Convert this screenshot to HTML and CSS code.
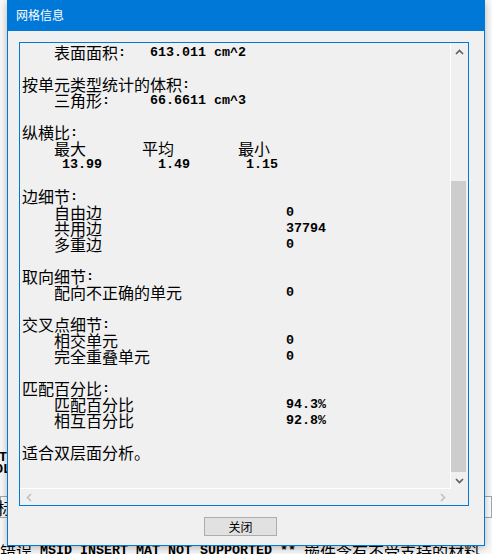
FILE: index.html
```html
<!DOCTYPE html>
<html lang="zh-CN">
<head>
<meta charset="utf-8">
<title>网格信息</title>
<link rel="stylesheet" href="styles.css">
</head>
<body>
  <!-- log window underneath the dialog -->
  <div class="log">
    <div class="log-line log-t">T</div>
    <div class="log-line log-ol">OL</div>
    <div class="log-field"><span class="log-cn">标</span></div>
    <div class="log-line log-err"><span class="log-cn">错误</span><span> MSID_INSERT_MAT_NOT_SUPPORTED ** </span><span class="log-cn">嵌件含有不受支持的材料</span></div>
  </div>

  <section class="dialog">
    <header class="titlebar">网格信息</header>
    <div class="client">
      <div class="report">
        <div class="report-text">
          <div class="ln sub"><span class="k w96"><span class="cn">表面面积</span><span class="num">:</span></span><span class="num">613.011 cm^2</span></div>
          <div class="ln"></div>
          <div class="ln"><span class="cn">按单元类型统计的体积</span><span class="num">:</span></div>
          <div class="ln sub"><span class="k w96"><span class="cn">三角形</span><span class="num">:</span></span><span class="num">66.6611 cm^3</span></div>
          <div class="ln"></div>
          <div class="ln"><span class="cn">纵横比</span><span class="num">:</span></div>
          <div class="ln sub"><span class="k w88"><span class="cn">最大</span></span><span class="k w96"><span class="cn">平均</span></span><span class="cn">最小</span></div>
          <div class="ln sub-num"><span class="k w96"><span class="num">13.99</span></span><span class="k w88"><span class="num">1.49</span></span><span class="num">1.15</span></div>
          <div class="ln"></div>
          <div class="ln"><span class="cn">边细节</span><span class="num">:</span></div>
          <div class="ln sub"><span class="k w232"><span class="cn">自由边</span></span><span class="num">0</span></div>
          <div class="ln sub"><span class="k w232"><span class="cn">共用边</span></span><span class="num">37794</span></div>
          <div class="ln sub"><span class="k w232"><span class="cn">多重边</span></span><span class="num">0</span></div>
          <div class="ln"></div>
          <div class="ln"><span class="cn">取向细节</span><span class="num">:</span></div>
          <div class="ln sub"><span class="k w232"><span class="cn">配向不正确的单元</span></span><span class="num">0</span></div>
          <div class="ln"></div>
          <div class="ln"><span class="cn">交叉点细节</span><span class="num">:</span></div>
          <div class="ln sub"><span class="k w232"><span class="cn">相交单元</span></span><span class="num">0</span></div>
          <div class="ln sub"><span class="k w232"><span class="cn">完全重叠单元</span></span><span class="num">0</span></div>
          <div class="ln"></div>
          <div class="ln"><span class="cn">匹配百分比</span><span class="num">:</span></div>
          <div class="ln sub"><span class="k w232"><span class="cn">匹配百分比</span></span><span class="num">94.3%</span></div>
          <div class="ln sub"><span class="k w232"><span class="cn">相互百分比</span></span><span class="num">92.8%</span></div>
          <div class="ln"></div>
          <div class="ln"><span class="cn">适合双层面分析。</span></div>
        </div>

        <div class="vscroll">
          <div class="sb-btn">
            <svg width="9" height="6" viewBox="0 0 9 6"><polyline points="1,5 4.5,1.5 8,5" fill="none" stroke="#606060" stroke-width="1.7"/></svg>
          </div>
          <div class="vtrack"><div class="vthumb"></div></div>
          <div class="sb-btn">
            <svg width="9" height="6" viewBox="0 0 9 6"><polyline points="1,1 4.5,4.5 8,1" fill="none" stroke="#606060" stroke-width="1.7"/></svg>
          </div>
        </div>

        <div class="hscroll">
          <div class="sb-btn">
            <svg width="6" height="9" viewBox="0 0 6 9"><polyline points="5,1 1.5,4.5 5,8" fill="none" stroke="#c2c2c2" stroke-width="1.7"/></svg>
          </div>
          <div class="htrack"></div>
          <div class="sb-btn">
            <svg width="6" height="9" viewBox="0 0 6 9"><polyline points="1,1 4.5,4.5 1,8" fill="none" stroke="#c2c2c2" stroke-width="1.7"/></svg>
          </div>
        </div>

        <div class="corner"></div>
      </div>

      <div class="actions">
        <button class="btn" type="button">关闭</button>
      </div>
    </div>
  </section>
</body>
</html>
```

FILE: styles.css
```css
html, body {
  margin: 0;
  padding: 0;
}

body {
  position: relative;
  width: 492px;
  height: 554px;
  overflow: hidden;
  background: #f9f9f9;
  font-family: "Noto Sans CJK SC", sans-serif;
}

/* ---------- log window behind the dialog ---------- */
.log {
  padding-top: 452px;
  font: bold 13.333px "Liberation Mono", monospace;
  color: #000;
}

.log-line {
  height: 12px;
  line-height: 12px;
  white-space: pre;
}

.log-t { margin-left: -1px; }
.log-ol { margin-left: -5px; }

.log-field {
  margin-top: 20px;
  height: 22px;
  box-sizing: border-box;
  border: 1px solid #a6a6a6;
  background: #fcfcfc;
  padding-left: 0;
  display: flex;
  align-items: center;
}

.log-field .log-cn {
  margin-left: -4px;
}

.log-cn {
  font: 16px/16px "Noto Sans CJK SC", sans-serif;
}

.log-err {
  margin-top: 25px;
  height: 16px;
  line-height: 16px;
  display: flex;
  align-items: center;
}

/* ---------- dialog ---------- */
.dialog {
  position: absolute;
  left: 7px;
  top: 0;
  width: 478px;
  height: 546px;
  box-sizing: border-box;
  border: 1px solid #0078d7;
  background: #f0f0f0;
  box-shadow: 0 2px 8px rgba(0, 0, 0, 0.28);
  display: flex;
  flex-direction: column;
}

.titlebar {
  height: 30px;
  line-height: 28px;
  padding-left: 8px;
  background: #0078d7;
  color: #fff;
  font-size: 12px;
}

.client {
  padding: 11px 15px 0 11px;
  display: flex;
  flex-direction: column;
}

/* edit box with scrollbars */
.report {
  width: 450px;
  height: 464px;
  box-sizing: border-box;
  border: 1px solid #0078d7;
  display: grid;
  grid-template-columns: 431px 17px;
  grid-template-rows: 446px 16px;
}

.report-text {
  border-right: 1px solid #fff;
  border-bottom: 1px solid #fff;
  padding: 2px 0 0 2px;
  overflow: hidden;
  color: #000;
}

.ln {
  display: flex;
  align-items: center;
  height: 16px;
  white-space: pre;
}

.sub { padding-left: 32px; }
.sub-num { padding-left: 40px; }

.k {
  display: flex;
  align-items: center;
  flex: none;
}

.w88 { width: 88px; }
.w96 { width: 96px; }
.w232 { width: 232px; }

.cn {
  font-size: 16px;
  line-height: 16px;
  position: relative;
  top: -1px;
}

.num {
  font: bold 13.333px/16px "Liberation Mono", monospace;
}

.vscroll {
  display: flex;
  flex-direction: column;
}

.sb-btn {
  flex: none;
  width: 17px;
  height: 17px;
  display: flex;
  align-items: center;
  justify-content: center;
}

.vscroll .sb-btn { width: 17px; }

.vtrack {
  flex: 1;
  display: flex;
  flex-direction: column;
  justify-content: flex-end;
}

.vthumb {
  height: 291px;
  width: 15px;
  background: #cdcdcd;
}

.hscroll {
  display: flex;
  align-items: center;
}

.hscroll .sb-btn {
  height: 16px;
}

.htrack { flex: 1; }

.corner {
  background: #f0f0f0;
}

.actions {
  display: flex;
  padding-top: 11px;
  padding-left: 185px;
}

.btn {
  width: 73px;
  height: 19px;
  box-sizing: border-box;
  margin: 0;
  padding: 0;
  border: 1px solid #adadad;
  background: #e1e1e1;
  color: #000;
  font: 12px/16px "Noto Sans CJK SC", sans-serif;
  text-align: center;
}
```
